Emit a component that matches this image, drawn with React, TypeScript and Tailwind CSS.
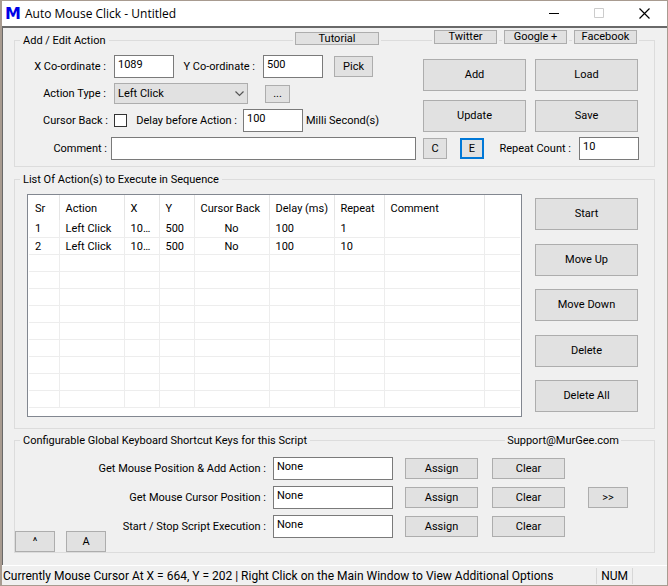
import { useState } from 'react'
import type { ButtonHTMLAttributes, ReactNode } from 'react'
import clsx from 'clsx'

const actions = [
  { sr: 1, action: 'Left Click', x: '1089', y: '500', back: 'No', delay: '100', repeat: '1', comment: '' },
  { sr: 2, action: 'Left Click', x: '1089', y: '500', back: 'No', delay: '100', repeat: '10', comment: '' },
]

const shortcuts = [
  { id: 'add-action', label: 'Get Mouse Position & Add Action :' },
  { id: 'cursor-pos', label: 'Get Mouse Cursor Position :' },
  { id: 'start-stop', label: 'Start / Stop Script Execution :' },
]

const EMPTY_ROWS = 9

const inputClass = 'h-[23px] min-w-0 border border-[#7a7a7a] bg-white px-[3px] pb-1 text-black outline-none'

function Btn({ className, ...props }: ButtonHTMLAttributes<HTMLButtonElement>) {
  return (
    <button
      type="button"
      className={clsx('flex shrink-0 items-center justify-center border bg-[#e1e1e1] whitespace-nowrap', className)}
      {...props}
    />
  )
}

function Gray({ className, ...props }: ButtonHTMLAttributes<HTMLButtonElement>) {
  return <Btn className={clsx('border-[#adadad]', className)} {...props} />
}

// small button that sits over the group line
function TopLink({ children, className }: { children: ReactNode; className: string }) {
  return (
    <div className="bg-[#f0f0f0] px-0.5">
      <Gray className={clsx('overflow-hidden', className)}>{children}</Gray>
    </div>
  )
}

function TitleBar() {
  return (
    <header className="flex h-[26px] items-center border-t border-[#a89b90] bg-white pl-[3px] font-['Open_Sans',sans-serif]">
      <span className="w-5 font-['DejaVu_Sans',sans-serif] text-base font-bold text-[#0000e6]">M</span>
      <h1 className="flex-1 text-xs">Auto Mouse Click - Untitled</h1>
      <button type="button" aria-label="Minimize" className="flex w-[45px] justify-center">
        <svg width="11" height="11" viewBox="0 0 11 11" stroke="#000"><path d="M0 5.5h10" /></svg>
      </button>
      <button type="button" aria-label="Maximize" className="flex w-[45px] justify-center">
        <svg width="11" height="11" viewBox="0 0 11 11" fill="none" stroke="#ccc"><path d="M.5.5h9v9h-9z" /></svg>
      </button>
      <button type="button" aria-label="Close" className="flex w-[45px] justify-center">
        <svg width="11" height="11" viewBox="0 0 11 11" stroke="#000" strokeWidth="1.2"><path d="M.5.5l10 10M10.5.5l-10 10" /></svg>
      </button>
    </header>
  )
}

function EditGroup() {
  const [back, setBack] = useState(false)
  return (
    <section className="border border-[#dcdcdc]">
      <div className="-mt-[11px] flex items-start pr-[15px]">
        <h2 className="mt-[3px] ml-[5px] bg-[#f0f0f0] px-[3px]">Add / Edit Action</h2>
        <div className="flex-1" />
        <div className="mt-0.5 mr-[51px]">
          <TopLink className="h-[13px] w-[84px]">Tutorial</TopLink>
        </div>
        <div className="flex gap-[3px]">
          <TopLink className="h-[14px] w-[63px]">Twitter</TopLink>
          <TopLink className="h-[14px] w-[63px]">Google +</TopLink>
          <TopLink className="h-[14px] w-[63px]">Facebook</TopLink>
        </div>
      </div>

      <div className="mt-1.5 flex pr-4">
        <div className="flex flex-1 flex-col gap-[5px]">
          <div className="flex items-center">
            <label htmlFor="x" className="mr-2 w-[91px] text-right">X Co-ordinate :</label>
            <input id="x" defaultValue="1089" className={clsx(inputClass, 'w-[60px]')} />
            <label htmlFor="y" className="mr-2 w-[81px] text-right">Y Co-ordinate :</label>
            <input id="y" defaultValue="500" className={clsx(inputClass, 'w-[60px]')} />
            <Gray className="ml-[11px] h-[21px] w-[39px]">Pick</Gray>
          </div>
          <div className="flex items-center">
            <label htmlFor="type" className="mr-2 w-[91px] text-right">Action Type :</label>
            <div className="relative">
              <select id="type" className="h-[21px] w-[134px] appearance-none border border-[#adadad] bg-[#e1e1e1] pl-[3px]">
                <option>Left Click</option>
                <option>Right Click</option>
                <option>Middle Click</option>
              </select>
              <svg width="9" height="6" viewBox="0 0 9 6" fill="none" stroke="#555" strokeWidth="1.2" className="pointer-events-none absolute top-2 right-1">
                <path d="M.5.5l4 4 4-4" />
              </svg>
            </div>
            <Gray className="ml-[17px] h-[18px] w-[25px]">...</Gray>
          </div>
          <div className="flex items-center">
            <label htmlFor="back" className="mr-1.5 w-[93px] text-right">Cursor Back :</label>
            <input
              id="back"
              type="checkbox"
              checked={back}
              onChange={(e) => setBack(e.target.checked)}
              className="size-[13px] appearance-none border border-[#333] bg-white checked:bg-[#333]"
            />
            <label htmlFor="delay" className="mr-1.5 w-[110px] text-right">Delay before Action :</label>
            <input id="delay" defaultValue="100" className={clsx(inputClass, 'w-[60px]')} />
            <span className="ml-[3px]">Milli Second(s)</span>
          </div>
        </div>
        <div className="mt-1 grid grid-cols-2 content-start gap-[9px]">
          <Gray className="h-8 w-[103px]">Add</Gray>
          <Gray className="h-8 w-[103px]">Load</Gray>
          <Gray className="h-8 w-[103px]">Update</Gray>
          <Gray className="h-8 w-[103px]">Save</Gray>
        </div>
      </div>

      <div className="mt-[5px] mb-[6px] flex items-center pr-[15px]">
        <label htmlFor="comment" className="mr-1 w-[92px] text-right">Comment :</label>
        <input id="comment" className={clsx(inputClass, 'flex-1')} />
        <Gray className="ml-[7px] h-[21px] w-6">C</Gray>
        <Btn className="ml-[13px] h-[21px] w-6 border-2 border-[#0078d7]">E</Btn>
        <label htmlFor="repeat" className="mr-2 w-[87px] text-right">Repeat Count :</label>
        <input id="repeat" defaultValue="10" className={clsx(inputClass, 'w-[60px]')} />
      </div>
    </section>
  )
}

function ActionTable() {
  const th = 'border-r border-[#e5e5e5] px-1.5 pt-0.5 text-left font-normal whitespace-nowrap'
  const td = 'border-r border-b border-[#ededed] px-1.5 pt-px leading-[15px] truncate'
  return (
    <div className="h-[223px] flex-1 border border-[#828790] bg-white px-px">
      <table className="w-full table-fixed">
        <colgroup>
          <col className="w-[30px]" />
          <col className="w-[65px]" />
          <col className="w-[35px]" />
          <col className="w-[35px]" />
          <col className="w-[75px]" />
          <col className="w-[65px]" />
          <col className="w-[50px]" />
          <col className="w-[100px]" />
          <col />
        </colgroup>
        <thead>
          <tr className="h-[25px]">
            <th className={th}>Sr</th>
            <th className={th}>Action</th>
            <th className={th}>X</th>
            <th className={th}>Y</th>
            <th className={clsx(th, 'text-center')}>Cursor Back</th>
            <th className={th}>Delay (ms)</th>
            <th className={th}>Repeat</th>
            <th className={th}>Comment</th>
            <th />
          </tr>
        </thead>
        <tbody>
          {actions.map((a) => (
            <tr key={a.sr} className="h-[17px]">
              <td className={td}>{a.sr}</td>
              <td className={td}>{a.action}</td>
              <td className={td}>{a.x}</td>
              <td className={td}>{a.y}</td>
              <td className={clsx(td, 'text-center')}>{a.back}</td>
              <td className={td}>{a.delay}</td>
              <td className={td}>{a.repeat}</td>
              <td className={td}>{a.comment}</td>
              <td className="border-b border-[#ededed]" />
            </tr>
          ))}
          {Array.from({ length: EMPTY_ROWS }, (_, i) => (
            <tr key={i} className="h-[17px]">
              {Array.from({ length: 8 }, (_, c) => (
                <td key={c} className={td} />
              ))}
              <td className="border-b border-[#ededed]" />
            </tr>
          ))}
        </tbody>
      </table>
    </div>
  )
}

function ListGroup() {
  return (
    <section className="mt-3 border border-[#dcdcdc]">
      <h2 className="-mt-2 ml-[5px] w-fit bg-[#f0f0f0] px-[3px]">List Of Action(s) to Execute in Sequence</h2>
      <div className="mt-1.5 mb-[11px] flex pr-4 pl-3">
        <ActionTable />
        <div className="ml-[13px] flex flex-col justify-between pt-1 pb-[5px]">
          {['Start', 'Move Up', 'Move Down', 'Delete', 'Delete All'].map((name) => (
            <Gray key={name} className="h-8 w-[103px]">{name}</Gray>
          ))}
        </div>
      </div>
    </section>
  )
}

function ShortcutGroup() {
  return (
    <section className="mt-[11px] border border-[#dcdcdc]">
      <div className="-mt-2 flex justify-between pr-[33px] pl-[5px]">
        <h2 className="bg-[#f0f0f0] px-[3px]">Configurable Global Keyboard Shortcut Keys for this Script</h2>
        <a href="mailto:Support@MurGee.com" className="bg-[#f0f0f0] px-0.5">Support@MurGee.com</a>
      </div>
      <div className="mt-2 flex">
        <div className="-mr-4 flex gap-[11px] self-end">
          <Gray className="h-[21px] w-10">^</Gray>
          <Gray className="h-[21px] w-10">A</Gray>
        </div>
        <div className="mb-3.5 flex flex-1 flex-col gap-1.5">
          {shortcuts.map((s, i) => (
            <div key={s.id} className="flex items-center pr-[26px]">
              <label htmlFor={s.id} className="mr-[7px] flex-1 text-right whitespace-nowrap">{s.label}</label>
              <input id={s.id} defaultValue="None" className={clsx(inputClass, 'w-[120px]')} />
              <Gray className="ml-3 h-[21px] w-[73px]">Assign</Gray>
              <Gray className="mr-[23px] ml-3.5 h-[21px] w-[73px]">Clear</Gray>
              {i === 1 ? <Gray className="h-[21px] w-10">&gt;&gt;</Gray> : <div className="w-10" />}
            </div>
          ))}
        </div>
      </div>
    </section>
  )
}

export default function App() {
  return (
    <div className="border-r border-b border-l-2 border-[#a89b90] bg-[#f0f0f0] font-[Roboto,sans-serif] text-[11px]/4 text-black">
      <TitleBar />
      <main className="border-t-2 border-l border-[#696969] pt-3 pr-3 pb-3 pl-[11px]">
        <EditGroup />
        <ListGroup />
        <ShortcutGroup />
      </main>
      <footer className="flex h-5 items-center border-t border-white pt-px pl-px text-xs">
        <p className="flex-1">Currently Mouse Cursor At X = 664, Y = 202 | Right Click on the Main Window to View Additional Options</p>
        <span className="mr-[34px] border-x border-[#d7d7d7] px-1">NUM</span>
      </footer>
    </div>
  )
}
